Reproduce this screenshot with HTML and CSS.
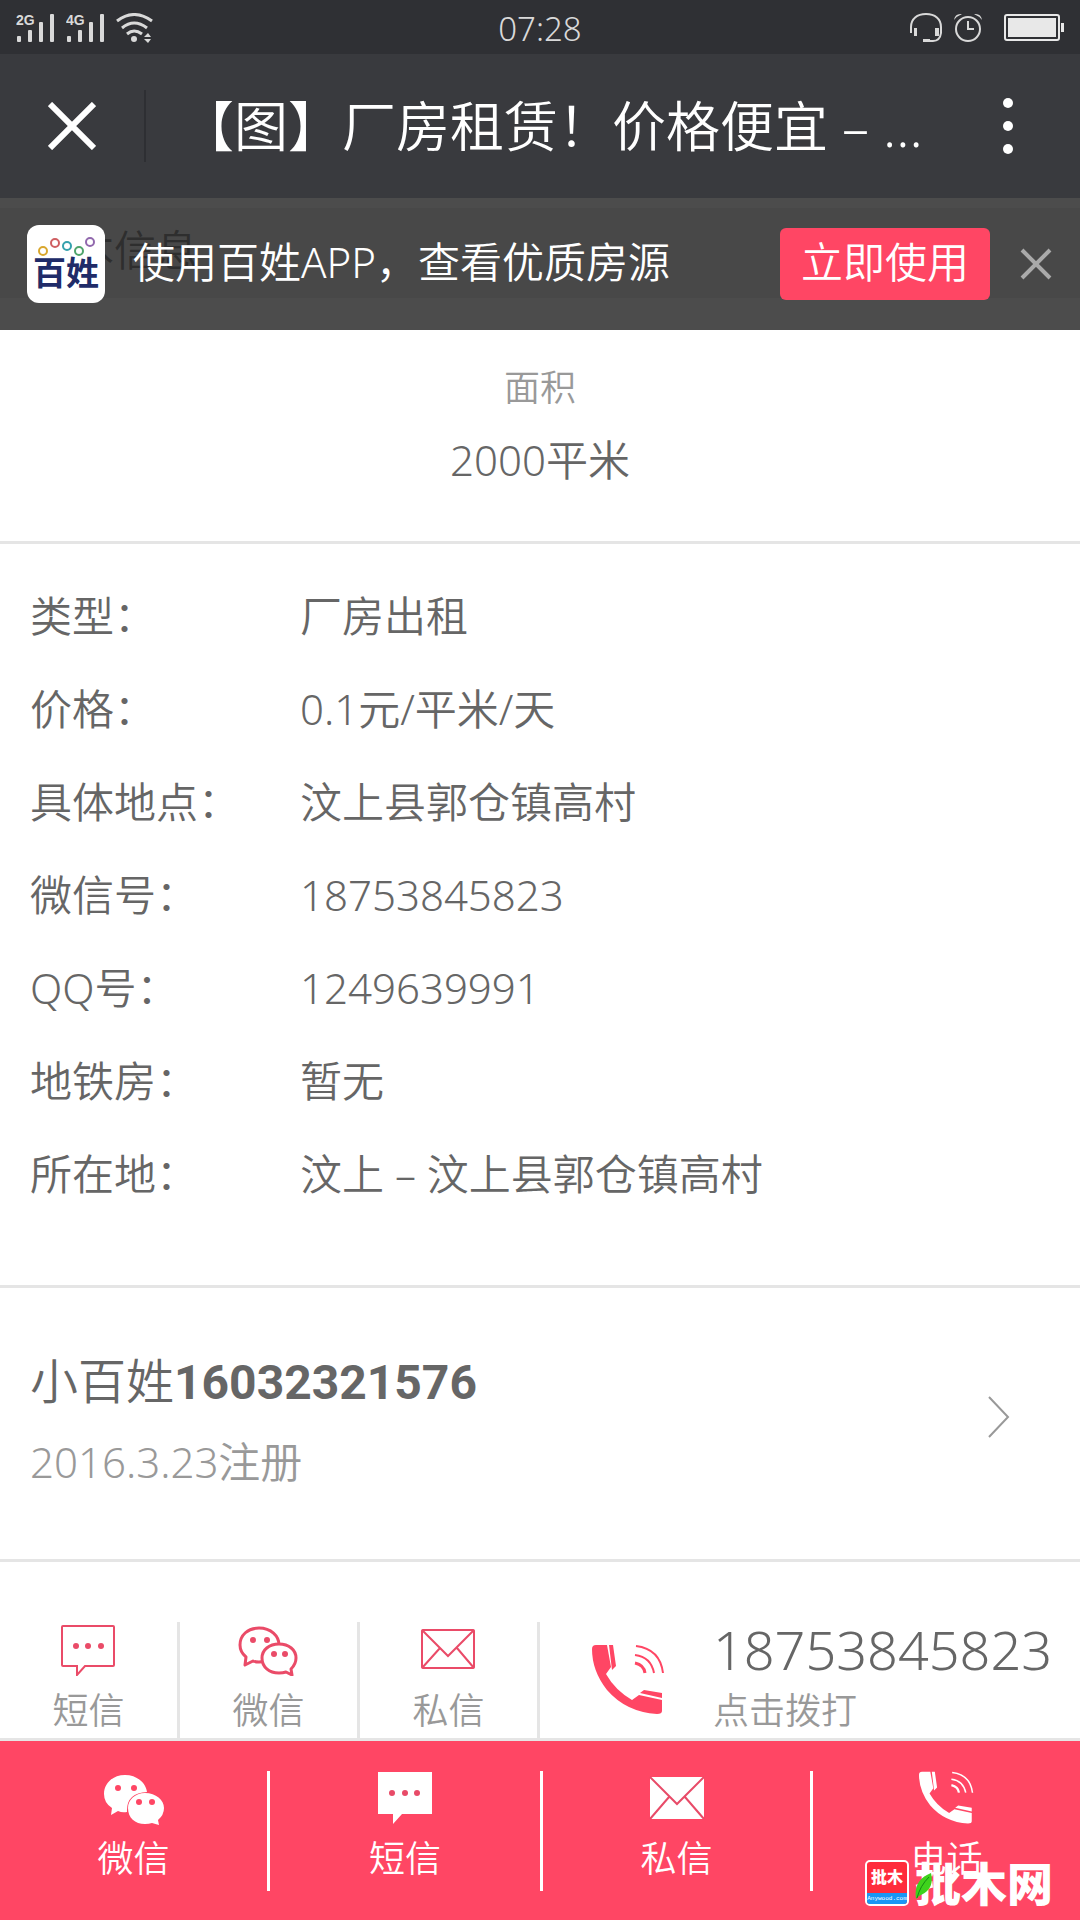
FILE: index.html
```html
<!DOCTYPE html>
<html lang="zh-CN">
<head>
<meta charset="utf-8">
<meta name="viewport" content="width=device-width, initial-scale=1">
<title>【图】厂房租赁！价格便宜</title>
<link rel="stylesheet" href="styles.css">
</head>
<body>
<svg class="defs" width="0" height="0" aria-hidden="true">
  <symbol id="phone" viewBox="0 0 73 70">
    <path fill="currentColor" d="M0 4Q0 0 4 0H15L19 22L14 29Q23 45 40 55L47 50L70 55V66Q70 69 65 69Q34 67 15 45Q0 26 0 4Z"/>
    <path fill="currentColor" d="M17 0H21L24 21L20 25ZM48 48L52 45L70 48V53Z"/>
    <g fill="none" stroke="currentColor" stroke-width="2"><path d="M44 1Q68 4 71 28M43 10Q59 12 62 28" /><path stroke-width="3" d="M43 18Q52 20 53 28"/></g>
  </symbol>
</svg>
<header>
  <div class="status">
    <div class="status-left">
      <svg width="38" height="30" viewBox="0 0 38 30"><g fill="#d9d9d9"><rect x="1" y="23" width="4" height="6" rx="1"/><rect x="12" y="17" width="4" height="12" rx="1"/><rect x="23" y="9" width="4" height="20" rx="1"/><rect x="34" y="1" width="4" height="28" rx="1"/><text x="0" y="12" class="net">2G</text></g></svg>
      <svg width="38" height="30" viewBox="0 0 38 30"><g fill="#d9d9d9"><rect x="1" y="23" width="4" height="6" rx="1"/><rect x="12" y="17" width="4" height="12" rx="1"/><rect x="23" y="9" width="4" height="20" rx="1"/><rect x="34" y="1" width="4" height="28" rx="1"/><text x="0" y="12" class="net">4G</text></g></svg>
      <svg width="38" height="30" viewBox="0 0 38 30"><g fill="none" stroke="#d9d9d9" stroke-width="3"><path d="M1 8Q18 -5 36 8M6 15Q18 5 31 15M11 21Q18 15 26 21"/></g><circle cx="18" cy="26" r="3" fill="#d9d9d9"/><path fill="#d9d9d9" d="M28 24L32 20L35 24ZM28 26H35L32 30Z"/></svg>
    </div>
    <time class="clock">07:28</time>
    <div class="status-right">
      <svg width="32" height="30" viewBox="0 0 32 30"><path fill="none" stroke="#d9d9d9" stroke-width="2" d="M1 20V14C1 6 7 1 16 1C25 1 31 6 31 14V20Q30 28 23 28H13"/><path fill="#d9d9d9" d="M4 15H7V23H4ZM25 15H29V23H25ZM13 26H20V29H13Z"/></svg>
      <svg width="28" height="30" viewBox="0 0 28 30"><circle cx="14" cy="16" r="12" fill="none" stroke="#d9d9d9" stroke-width="2"/><path d="M14 8V16H20" fill="none" stroke="#d9d9d9" stroke-width="2"/><path fill="#d9d9d9" d="M0 7Q1 0 8 1Q3 3 0 7ZM28 7Q27 0 20 1Q25 3 28 7Z"/></svg>
      <svg class="battery" width="60" height="28" viewBox="0 0 60 28"><rect x="1" y="1" width="54" height="25" rx="2" fill="none" stroke="#e8e8e8" stroke-width="2"/><rect x="4" y="4" width="48" height="19" fill="#e8e8e8"/><rect x="57" y="9" width="3" height="9" fill="#e8e8e8"/></svg>
    </div>
  </div>
  <div class="titlebar">
    <button class="close" aria-label="关闭"><svg width="48" height="48" viewBox="0 0 48 48"><path d="M2 2L46 46M46 2L2 46" stroke="#fff" stroke-width="6"/></svg></button>
    <h1>【图】厂房租赁！价格便宜 – ...</h1>
    <button class="more" aria-label="更多"><svg width="10" height="58" viewBox="0 0 10 58"><g fill="#fff"><circle cx="5" cy="6" r="5"/><circle cx="5" cy="29" r="5"/><circle cx="5" cy="52" r="5"/></g></svg></button>
  </div>
</header>

<main>
  <aside class="promo">
    <span class="app-icon">
      <svg width="60" height="20" viewBox="0 0 60 20"><g fill="none" stroke-width="2"><circle cx="7" cy="14" r="4" stroke="#d9a72e"/><circle cx="19" cy="6" r="4" stroke="#cf5f62"/><circle cx="31" cy="9" r="4" stroke="#34a1ad"/><circle cx="43" cy="14" r="4" stroke="#4fa46b"/><circle cx="54" cy="5" r="4" stroke="#9168ad"/></g></svg>
      <b>百姓</b>
    </span>
    <p>使用百姓APP，查看优质房源</p>
    <button class="use">立即使用</button>
    <button class="dismiss" aria-label="关闭提示"><svg width="32" height="32" viewBox="0 0 32 32"><path d="M2 2L30 30M30 2L2 30" stroke="#aaa" stroke-width="4"/></svg></button>
  </aside>
  <h2 class="strip">基本信息</h2>

  <section class="area">
    <span>面积</span>
    <strong>2000平米</strong>
  </section>

  <dl class="details">
    <dt>类型：</dt><dd>厂房出租</dd>
    <dt>价格：</dt><dd>0.1元/平米/天</dd>
    <dt>具体地点：</dt><dd>汶上县郭仓镇高村</dd>
    <dt>微信号：</dt><dd>18753845823</dd>
    <dt>QQ号：</dt><dd>1249639991</dd>
    <dt>地铁房：</dt><dd>暂无</dd>
    <dt>所在地：</dt><dd>汶上 – 汶上县郭仓镇高村</dd>
  </dl>

  <a class="user" href="#user">
    <span class="who"><span class="name">小百姓<b>16032321576</b></span><span class="since">2016.3.23注册</span></span>
    <svg width="24" height="44" viewBox="0 0 24 44"><path d="M2 2L21 22L2 42" fill="none" stroke="#999" stroke-width="2"/></svg>
  </a>

  <section class="contact">
    <a class="way" href="#sms"><svg width="60" height="54" viewBox="0 0 60 54"><path d="M5 4H55Q56 4 56 5V43Q56 44 55 44H27L19 53V44H5Q4 44 4 43V5Q4 4 5 4Z" fill="none" stroke="#ea4b68" stroke-width="2"/><g fill="#ea4b68"><circle cx="18" cy="24" r="3"/><circle cx="30" cy="24" r="3"/><circle cx="43" cy="24" r="3"/></g></svg><span>短信</span></a>
    <a class="way" href="#wechat"><svg width="60" height="54" viewBox="0 0 60 54"><g fill="#fff" stroke="#ea4b68" stroke-width="3" stroke-linejoin="round"><path d="M8 35Q2 30 2 23C2 13 10 6 21 6C33 6 41 14 41 23C41 33 33 40 21 40Q17 40 15 39L7 43Z"/><path d="M41 22C51 22 58 28 58 36Q58 42 53 47L54 53L48 50Q45 51 41 51C31 51 24 45 24 36C24 28 31 22 41 22Z"/></g><g fill="#ea4b68"><circle cx="15" cy="18" r="3"/><circle cx="29" cy="18" r="3"/><circle cx="36" cy="32" r="3"/><circle cx="47" cy="32" r="3"/></g></svg><span>微信</span></a>
    <a class="way" href="#mail"><svg width="60" height="54" viewBox="0 0 60 54"><g fill="none" stroke="#ea4b68" stroke-width="2"><rect x="4" y="8" width="52" height="38" rx="1"/><path d="M4 8L30 34L56 8M4 46L22 26M56 46L39 26"/></g></svg><span>私信</span></a>
    <a class="call" href="tel:18753845823"><svg width="73" height="70"><use href="#phone"/></svg><span class="number"><span>18753845823</span><small>点击拨打</small></span></a>
  </section>
</main>

<nav class="bar">
  <a href="#wechat"><svg width="60" height="54" viewBox="0 0 60 54"><path fill="#fff" d="M8 37Q0 32 0 23C0 12 9 4 21 4C33 4 42 12 43 21Q22 22 23 41Q18 42 14 40L7 44Z"/><path fill="#fff" d="M41 22C52 22 60 29 60 37Q60 44 54 49L55 54L48 52Q45 53 41 53C31 53 24 47 24 37C24 29 31 22 41 22Z"/><g fill="#ff4664"><circle cx="14" cy="17" r="3"/><circle cx="30" cy="17" r="3"/><circle cx="35" cy="31" r="3"/><circle cx="48" cy="31" r="3"/></g></svg><span>微信</span></a>
  <a href="#sms"><svg width="60" height="54" viewBox="0 0 60 54"><path d="M3 1H57V43H27L18 53V43H3Z" fill="#fff"/><g fill="#e84b68"><circle cx="17" cy="22" r="3"/><circle cx="30" cy="22" r="3"/><circle cx="42" cy="22" r="3"/></g></svg><span>短信</span></a>
  <a href="#mail"><svg width="60" height="54" viewBox="0 0 60 54"><rect x="3" y="6" width="54" height="42" fill="#fff"/><path d="M3 6L30 33L57 6M3 48L22 26M57 48L38 26" fill="none" stroke="#e84b68" stroke-width="2"/></svg><span>私信</span></a>
  <a href="tel:18753845823"><svg width="55" height="54"><use href="#phone"/></svg><span>电话</span></a>
  <div class="watermark">
    <span class="stamp"><b>批木</b><i>Anywood.com</i></span>
    <span class="brand">批木网</span>
    <svg class="leaf" width="18" height="28" viewBox="0 0 18 28"><path d="M1 27Q-2 8 16 1Q20 18 4 24L1 27Z" fill="#3fd21c"/><path d="M2 26Q5 14 14 5" fill="none" stroke="#138a12"/></svg>
  </div>
</nav>
</body>
</html>
```
FILE: styles.css
```css
* { box-sizing: border-box; margin: 0; padding: 0; }
body {
  min-height: 100vh;
  display: flex;
  flex-direction: column;
  background: #fff;
  color: #666;
  font-family: "Noto Sans", "Noto Sans CJK SC", sans-serif;
  font-weight: 350;
  font-size: 42px;
  line-height: 60px;
}
a { color: inherit; text-decoration: none; }
button { border: 0; background: none; font: inherit; color: inherit; cursor: pointer; }
svg { display: block; flex: none; }
.defs { position: absolute; }

/* system status */
.status {
  display: grid;
  grid-template-columns: 1fr auto 1fr;
  align-items: center;
  height: 54px;
  padding: 0 16px;
  background: #2f3034;
  color: #d9d9d9;
}
.status-left, .status-right { display: flex; align-items: center; gap: 12px; }
.status-right { justify-content: flex-end; }
.battery { margin-left: 10px; }
.clock { font-size: 33px; line-height: 54px; padding-top: 2px; }
.net { font: bold 14px "Liberation Sans", sans-serif; }

.titlebar {
  display: flex;
  align-items: center;
  height: 144px;
  background: #393a3e;
  color: #fff;
}
.close {
  display: flex;
  justify-content: center;
  width: 146px;
  padding: 12px 0;
  border-right: 2px solid #2e2f33;
}
h1 {
  flex: 1;
  padding-left: 34px;
  font-size: 54px;
  font-weight: 350;
  white-space: nowrap;
}
.more { padding: 0 67px; }

/* app promotion over the top of the listing */
main { position: relative; padding-top: 10px; }
.promo {
  position: absolute;
  top: 0;
  left: 0;
  right: 0;
  display: flex;
  align-items: center;
  height: 132px;
  padding: 0 28px 0 27px;
  background: rgba(0, 0, 0, 0.7);
  color: #fff;
}
.app-icon {
  display: flex;
  flex-direction: column;
  align-items: center;
  width: 78px;
  height: 78px;
  padding-top: 12px;
  border-radius: 12px;
  background: #fff;
  color: #202b68;
  font-size: 33px;
  line-height: 32px;
}
.app-icon b { font-weight: 700; }
.promo p { flex: 1; padding: 0 0 4px 28px; white-space: nowrap; }
.use {
  width: 210px;
  height: 72px;
  padding-bottom: 4px;
  border-radius: 6px;
  background: #ff4664;
  white-space: nowrap;
}
.dismiss { margin-left: 30px; }
.strip {
  height: 90px;
  padding-left: 30px;
  background: #f2f2f2;
  color: #999;
  font-size: 42px;
  font-weight: 350;
  line-height: 84px;
}

.area {
  display: flex;
  flex-direction: column;
  align-items: center;
  gap: 12px;
  padding: 60px 0 51px;
  border-bottom: 3px solid #e5e5e5;
}
.area span { color: #999; font-size: 36px; }
.area strong { font-weight: 350; }

.details {
  display: grid;
  grid-template-columns: 270px 1fr;
  row-gap: 33px;
  padding: 42px 30px 81px;
  border-bottom: 3px solid #e5e5e5;
}

.user {
  display: flex;
  align-items: center;
  justify-content: space-between;
  padding: 53px 69px 67px 30px;
  border-bottom: 3px solid #e5e5e5;
}
.who { display: flex; flex-direction: column; gap: 9px; }
.name { font-size: 48px; line-height: 80px; }
.name b { font-family: Roboto, sans-serif; font-weight: 700; }
.since { color: #999; }

.contact {
  display: flex;
  padding-top: 60px;
  border-bottom: 3px solid #e5e5e5;
}
.way {
  display: flex;
  flex-direction: column;
  align-items: center;
  gap: 8px;
  width: 16.666%;
  height: 116px;
  border-right: 3px solid #e5e5e5;
  color: #999;
  font-size: 36px;
  line-height: 54px;
}
.call { flex: 1; display: flex; align-items: center; padding-left: 52px; gap: 48px; }
.call svg { color: #ff4664; }
.number { display: flex; flex-direction: column; gap: 8px; font-size: 54px; line-height: 54px; }
.number small { color: #999; font-size: 36px; }

.bar {
  position: relative;
  flex: 1;
  display: grid;
  grid-template-columns: repeat(4, 1fr);
  align-items: start;
  min-height: 180px;
  padding: 30px 0;
  background: #ff4664;
  color: #fff;
  font-size: 36px;
}
.bar a { display: flex; flex-direction: column; align-items: center; gap: 4px; height: 120px; }
.bar a:nth-child(1) { border-right: 3px solid #fff; }
.bar a:nth-child(3), .bar a:nth-child(4) { border-left: 3px solid #fff; }

.watermark {
  position: absolute;
  right: 27px;
  bottom: 15px;
  display: flex;
  align-items: center;
  gap: 6px;
  font-weight: 900;
}
.stamp {
  display: flex;
  flex-direction: column;
  width: 44px;
  height: 46px;
  border: 2px solid #fff;
  border-radius: 5px;
  overflow: hidden;
  background: #ff2c3c;
  text-align: center;
}
.stamp b { font-size: 16px; line-height: 31px; }
.stamp i { background: #1996f5; font: 6px/11px "Liberation Mono", monospace; }
.brand { font-size: 46px; line-height: 46px; }
.leaf { position: absolute; left: 50px; top: 12px; }
```
